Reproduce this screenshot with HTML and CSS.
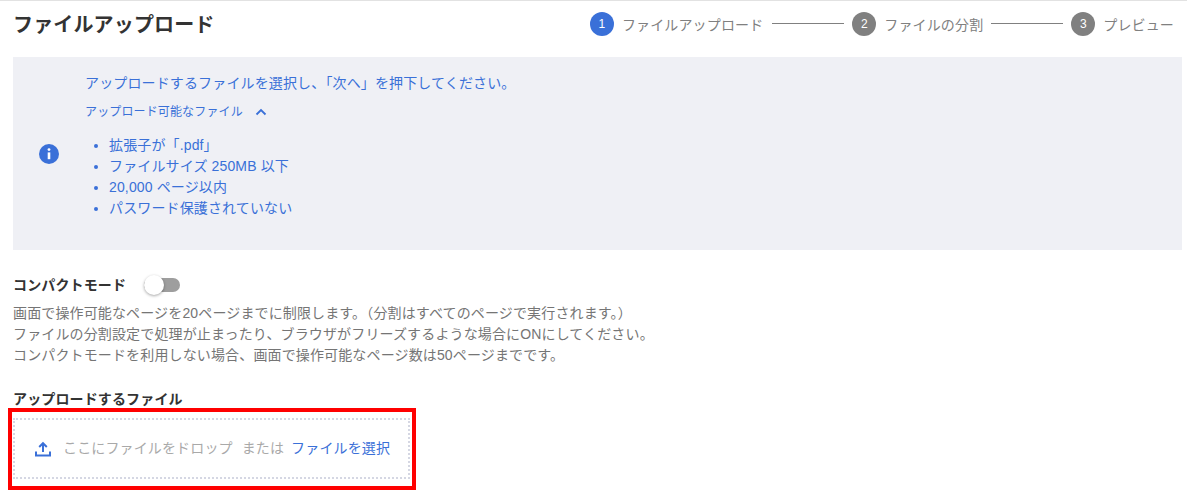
FILE: index.html
```html
<!DOCTYPE html>
<html lang="ja">
<head>
<meta charset="utf-8">
<title>ファイルアップロード</title>
<link rel="stylesheet" href="styles.css">
</head>
<body>
<main class="page">
  <header class="header">
    <h1 class="title">ファイルアップロード</h1>
    <ol class="steps">
      <li class="step step-active"><span class="step-num">1</span><span class="step-label">ファイルアップロード</span></li>
      <li class="step-line"></li>
      <li class="step"><span class="step-num">2</span><span class="step-label">ファイルの分割</span></li>
      <li class="step-line step-line-last"></li>
      <li class="step"><span class="step-num">3</span><span class="step-label">プレビュー</span></li>
    </ol>
  </header>

  <section class="info">
    <svg class="info-icon" viewBox="0 0 20 20" width="20" height="20" aria-hidden="true">
      <circle cx="10" cy="10" r="10" fill="#3a70d8"/>
      <circle cx="10" cy="5.6" r="1.4" fill="#fff"/>
      <rect x="8.7" y="8.4" width="2.6" height="6.8" fill="#fff"/>
    </svg>
    <div class="info-body">
      <p class="info-lead">アップロードするファイルを選択し、「次へ」を押下してください。</p>
      <p class="info-toggle">アップロード可能なファイル
        <svg class="chevron" viewBox="0 0 12 8" width="12" height="8" aria-hidden="true"><path d="M1.500 6.500 6 2l4.500 4.500" fill="none" stroke="#3a70d8" stroke-width="1.8"/></svg>
      </p>
      <ul class="info-list">
        <li>拡張子が「.pdf」</li>
        <li>ファイルサイズ 250MB 以下</li>
        <li>20,000 ページ以内</li>
        <li>パスワード保護されていない</li>
      </ul>
    </div>
  </section>

  <div class="compact">
    <span class="label">コンパクトモード</span>
    <span class="switch"><span class="switch-knob"></span></span>
  </div>
  <p class="desc">画面で操作可能なページを20ページまでに制限します。（分割はすべてのページで実行されます。）<br>ファイルの分割設定で処理が止まったり、ブラウザがフリーズするような場合にONにしてください。<br>コンパクトモードを利用しない場合、画面で操作可能なページ数は50ページまでです。</p>

  <div class="label upload-label">アップロードするファイル</div>
  <div class="highlight">
    <div class="drop">
      <svg class="upload-icon" viewBox="0 0 16 16" width="16" height="16" aria-hidden="true">
        <path d="M8 11V2.500M4.200 6 8 2.200 11.800 6" fill="none" stroke="#3a70d8" stroke-width="2"/>
        <path d="M1 10.500v4h14v-4" fill="none" stroke="#3a70d8" stroke-width="2"/>
      </svg>
      <span class="drop-text">ここにファイルをドロップ</span>
      <span class="drop-text">または</span>
      <span class="drop-link">ファイルを選択</span>
    </div>
  </div>
</main>
</body>
</html>
```
FILE: styles.css
```css
* { box-sizing: border-box; }
html, body { margin: 0; padding: 0; }
body {
  background: #fff;
  font-family: "Liberation Sans", "Noto Sans CJK JP", sans-serif;
  color: #333;
  letter-spacing: 0.14px;
  overflow: hidden;
}
.page {
  height: 502px;
  padding: 0 5px 0 13px;
  border-top: 1px solid #e2e2e2;
}
.header {
  display: flex;
  align-items: center;
  justify-content: space-between;
  height: 56px;
  padding-right: 8px;
}
.title {
  margin: -8px 0 0;
  font-size: 20px;
  font-weight: 700;
  line-height: 30px;
  letter-spacing: 0.15px;
  color: #333;
}
.steps {
  display: flex;
  align-items: center;
  margin: -11px 0 0;
  padding: 0;
  list-style: none;
}
.step { display: flex; align-items: center; gap: 8px; }
.step-num {
  display: flex;
  align-items: center;
  justify-content: center;
  width: 24px;
  height: 24px;
  border-radius: 50%;
  background: #808080;
  color: #fff;
  font-size: 12px;
}
.step-active .step-num { background: #3a70d8; }
.step-label { font-size: 14px; color: #808080; }
.step-line { width: 72px; height: 1px; margin: 0 8px 0 9px; background: #808080; }
.step-line-last { margin-left: 8px; }
.info {
  display: flex;
  align-items: center;
  height: 193px;
  background: #eff0f5;
  color: #3a70d8;
  padding: 0 0 0 26px;
}
.info-icon { flex: none; margin-top: 1px; }
.info-body { margin-left: 26px; padding-top: 15px; align-self: flex-start; }
.info-lead { margin: 0; font-size: 14px; line-height: 22px; }
.info-toggle {
  display: flex;
  align-items: center;
  gap: 12px;
  margin: 8px 0 0;
  font-size: 12px;
  line-height: 20px;
}
.info-list {
  margin: 13px 0 0;
  padding: 0 0 0 24px;
  font-size: 14px;
  line-height: 21px;
}
.compact { display: flex; align-items: center; gap: 18px; margin-top: 24px; height: 22px; }
.label { font-size: 14px; font-weight: 700; color: #333; line-height: 22px; }
.switch {
  position: relative;
  display: block;
  width: 36px;
  height: 14px;
  border-radius: 7px;
  background: #9e9e9e;
}
.switch-knob {
  position: absolute;
  left: 0;
  top: -3px;
  width: 20px;
  height: 20px;
  border-radius: 50%;
  background: #fff;
  box-shadow: 0 1px 3px rgba(0, 0, 0, 0.35);
}
.desc {
  margin: 7px 0 0;
  font-size: 14px;
  line-height: 21px;
  color: #757575;
}
.upload-label { margin-top: 22px; height: 20px; }
.highlight {
  width: 408px;
  height: 82px;
  margin: 0 0 0 -5px;
  padding: 6px 2px 7px 1px;
  border: 4px solid #f00;
}
.drop {
  display: flex;
  align-items: center;
  gap: 9px;
  height: 100%;
  padding: 0 0 3px 20px;
  border: 2px dotted #d5d7e3;
  font-size: 14px;
}
.upload-icon { flex: none; margin: 3px 3px 0 0; }
.drop-text { color: #a9a9a9; }
.drop-link { margin-left: -2px; color: #3a70d8; }
```
